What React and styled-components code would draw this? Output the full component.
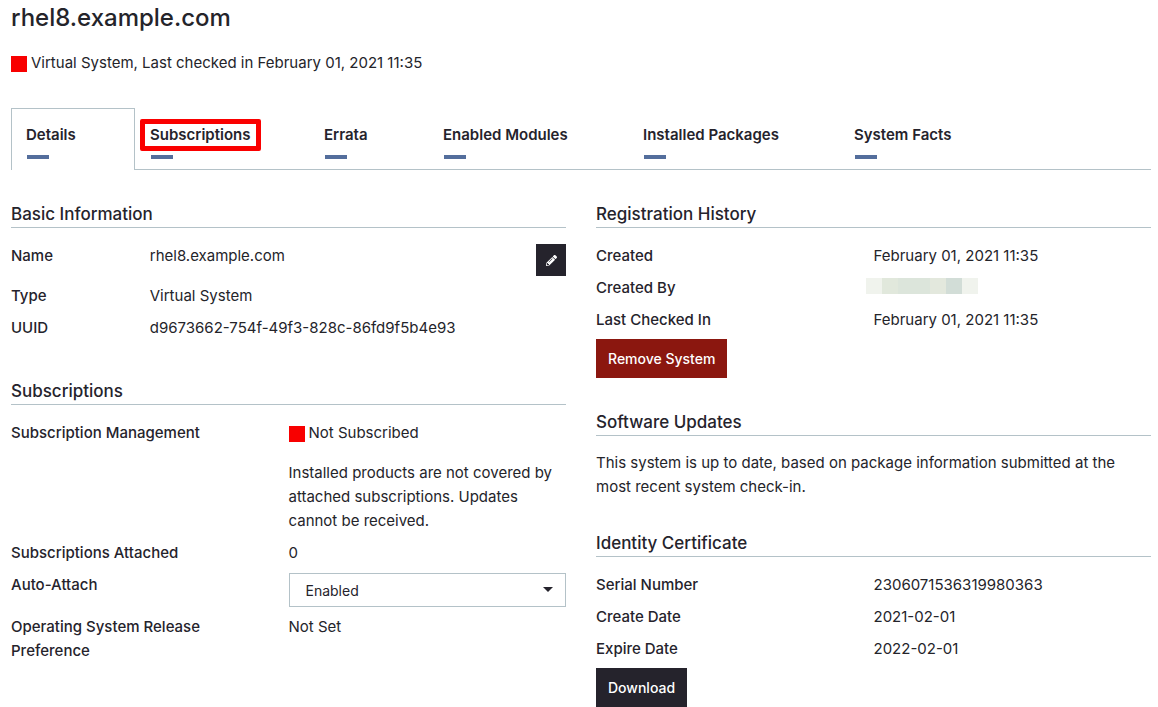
import React from "react";
import styled, { createGlobalStyle, css } from "styled-components";
import { FaPencilAlt } from "react-icons/fa";

const ink = "#25232c";
const line = "#b4c2c8";

const GlobalStyle = createGlobalStyle`
  *, *::before, *::after { box-sizing: border-box; }
  body { margin: 0; background: #fff; }
`;

const Page = styled.main`
  padding: 0 7px 0 11px;
  color: #24242a;
  font: 400 15px/24px Inter, "Open Sans", sans-serif;
`;

const Title = styled.h1`
  margin: 0;
  font-size: 24px;
  font-weight: 500;
  line-height: 36px;
`;

const Status = styled.div`
  display: flex;
  align-items: center;
  gap: 4px;
`;

const SystemStatus = styled(Status)`
  margin-top: 15px;
`;

const StatusMark = styled.span`
  flex: none;
  width: 16px;
  height: 16px;
  margin-top: 2px;
  background: #f80000;
`;

const Tabs = styled.div`
  display: grid;
  grid-template-columns: 124px 174px 119px 200px 211px 1fr;
  margin-top: 33px;
`;

const Tab = styled.button`
  position: relative;
  display: flex;
  flex-direction: column;
  align-items: flex-start;
  gap: 8px;
  height: 62px;
  padding: 15px 0 0 15px;
  border: 0;
  border-bottom: 1px solid ${line};
  background: none;
  color: ${ink};
  font: inherit;
  font-weight: 600;
  white-space: nowrap;

  &::after {
    content: "";
    width: 22px;
    height: 4px;
    margin-left: 1px;
    background: #546e9c;
  }

  ${(p) =>
    p.$active &&
    css`
      padding: 14px 0 0 14px;
      border: 1px solid ${line};
      border-bottom: 0;
    `}
`;

const Highlight = styled.span`
  position: absolute;
  top: 11px;
  left: 5px;
  width: 121px;
  height: 32px;
  border: 5px solid #fa0000;
  border-radius: 2px;
`;

const Columns = styled.div`
  display: grid;
  grid-template-columns: 1fr 1fr;
  column-gap: 30px;
  align-items: start;
  margin-top: 31px;
`;

const Column = styled.div`
  display: grid;
  gap: ${(p) => p.$gap}px;
`;

const Heading = styled.h2`
  margin: 0 0 11px;
  border-bottom: 1px solid ${line};
  color: ${ink};
  font-size: 17px;
  font-weight: 500;
  line-height: 26px;
`;

const List = styled.dl`
  margin: 0;
`;

const Row = styled.div`
  display: grid;
  grid-template-columns: ${(p) => (p.$narrow ? "1fr 3fr" : "1fr 1fr")};
  padding: 5px 0 3px;
`;

const Term = styled.dt`
  padding-right: 30px;
  color: ${ink};
  font-weight: 500;
`;

const Value = styled.dd`
  display: flex;
  justify-content: space-between;
  align-items: flex-start;
  min-width: 0;
  margin: 0;
`;

const StackedValue = styled.dd`
  margin: 0;
`;

const Text = styled.p`
  margin: 0;
  padding-top: 4px;
`;

const Explanation = styled.p`
  margin: 16px 0 0;
`;

const EditButton = styled.button`
  display: grid;
  place-items: center;
  width: 30px;
  height: 32px;
  padding: 0;
  border: 0;
  background: ${ink};
  color: #fff;
`;

const ActionButton = styled.button`
  display: block;
  height: 39px;
  margin-top: 4px;
  padding: 0 12px;
  border: 0;
  background: ${(p) => (p.$danger ? "#8b170f" : ink)};
  color: #fff;
  font: 500 14px/24px Inter, "Open Sans", sans-serif;
`;

const SelectBox = styled.div`
  position: relative;
`;

const Select = styled.select`
  appearance: none;
  display: block;
  width: 100%;
  height: 34px;
  padding: 2px 32px 0 16px;
  border: 1px solid ${line};
  border-radius: 0;
  background: #fff;
  color: ${ink};
  font: inherit;
  font-size: 14px;
`;

const Caret = styled.svg`
  position: absolute;
  top: 14px;
  right: 13px;
  pointer-events: none;
`;

const Redacted = styled.span`
  width: 112px;
  height: 16px;
  margin: 2px 0 0 -8px;
  background: linear-gradient(
    90deg,
    #f0f3ed 0 16px,
    #e1e8dc 16px 32px,
    #dce5db 32px 64px,
    #e3e8dd 64px 80px,
    #d2ddd7 80px 96px,
    #f0f3ed 96px
  );
`;

const RedactedValue = styled(Value)`
  justify-content: flex-start;
`;

function Field({ label, narrow, children }) {
  return (
    <Row $narrow={narrow}>
      <Term>{label}</Term>
      <Value>{children}</Value>
    </Row>
  );
}

const tabs = [
  "Details",
  "Subscriptions",
  "Errata",
  "Enabled Modules",
  "Installed Packages",
  "System Facts",
];

export default function App() {
  return (
    <>
      <GlobalStyle />
      <Page>
        <Title>rhel8.example.com</Title>
        <SystemStatus>
          <StatusMark />
          Virtual System, Last checked in February 01, 2021 11:35
        </SystemStatus>

        <Tabs role="tablist">
          {tabs.map((name) => (
            <Tab
              key={name}
              type="button"
              role="tab"
              aria-selected={name === "Details"}
              $active={name === "Details"}
            >
              {name}
              {name === "Subscriptions" && <Highlight />}
            </Tab>
          ))}
        </Tabs>

        <Columns>
          <Column $gap={35}>
            <section>
              <Heading>Basic Information</Heading>
              <List>
                <Field label="Name" narrow>
                  rhel8.example.com
                  <EditButton type="button" aria-label="Edit name">
                    <FaPencilAlt size={11} />
                  </EditButton>
                </Field>
                <Field label="Type" narrow>Virtual System</Field>
                <Field label="UUID" narrow>
                  d9673662-754f-49f3-828c-86fd9f5b4e93
                </Field>
              </List>
            </section>

            <section>
              <Heading>Subscriptions</Heading>
              <List>
                <Row>
                  <Term>Subscription Management</Term>
                  <StackedValue>
                    <Status>
                      <StatusMark />
                      Not Subscribed
                    </Status>
                    <Explanation>
                      Installed products are not covered by attached
                      subscriptions. Updates cannot be received.
                    </Explanation>
                  </StackedValue>
                </Row>
                <Field label="Subscriptions Attached">0</Field>
                <Row>
                  <Term>
                    <label htmlFor="auto-attach">Auto-Attach</label>
                  </Term>
                  <StackedValue>
                    <SelectBox>
                      <Select id="auto-attach" defaultValue="Enabled">
                        <option>Enabled</option>
                        <option>Disabled</option>
                      </Select>
                      <Caret width="10" height="5" viewBox="0 0 10 5">
                        <path d="M0 0h10L5 5z" fill={ink} />
                      </Caret>
                    </SelectBox>
                  </StackedValue>
                </Row>
                <Field label="Operating System Release Preference">Not Set</Field>
              </List>
            </section>
          </Column>

          <Column $gap={31}>
            <section>
              <Heading>Registration History</Heading>
              <List>
                <Field label="Created">February 01, 2021 11:35</Field>
                <Row>
                  <Term>Created By</Term>
                  <RedactedValue>
                    <Redacted />
                  </RedactedValue>
                </Row>
                <Field label="Last Checked In">February 01, 2021 11:35</Field>
              </List>
              <ActionButton type="button" $danger>Remove System</ActionButton>
            </section>

            <section>
              <Heading>Software Updates</Heading>
              <Text>
                This system is up to date, based on package information submitted
                at the most recent system check-in.
              </Text>
            </section>

            <section>
              <Heading>Identity Certificate</Heading>
              <List>
                <Field label="Serial Number">2306071536319980363</Field>
                <Field label="Create Date">2021-02-01</Field>
                <Field label="Expire Date">2022-02-01</Field>
              </List>
              <ActionButton type="button">Download</ActionButton>
            </section>
          </Column>
        </Columns>
      </Page>
    </>
  );
}
